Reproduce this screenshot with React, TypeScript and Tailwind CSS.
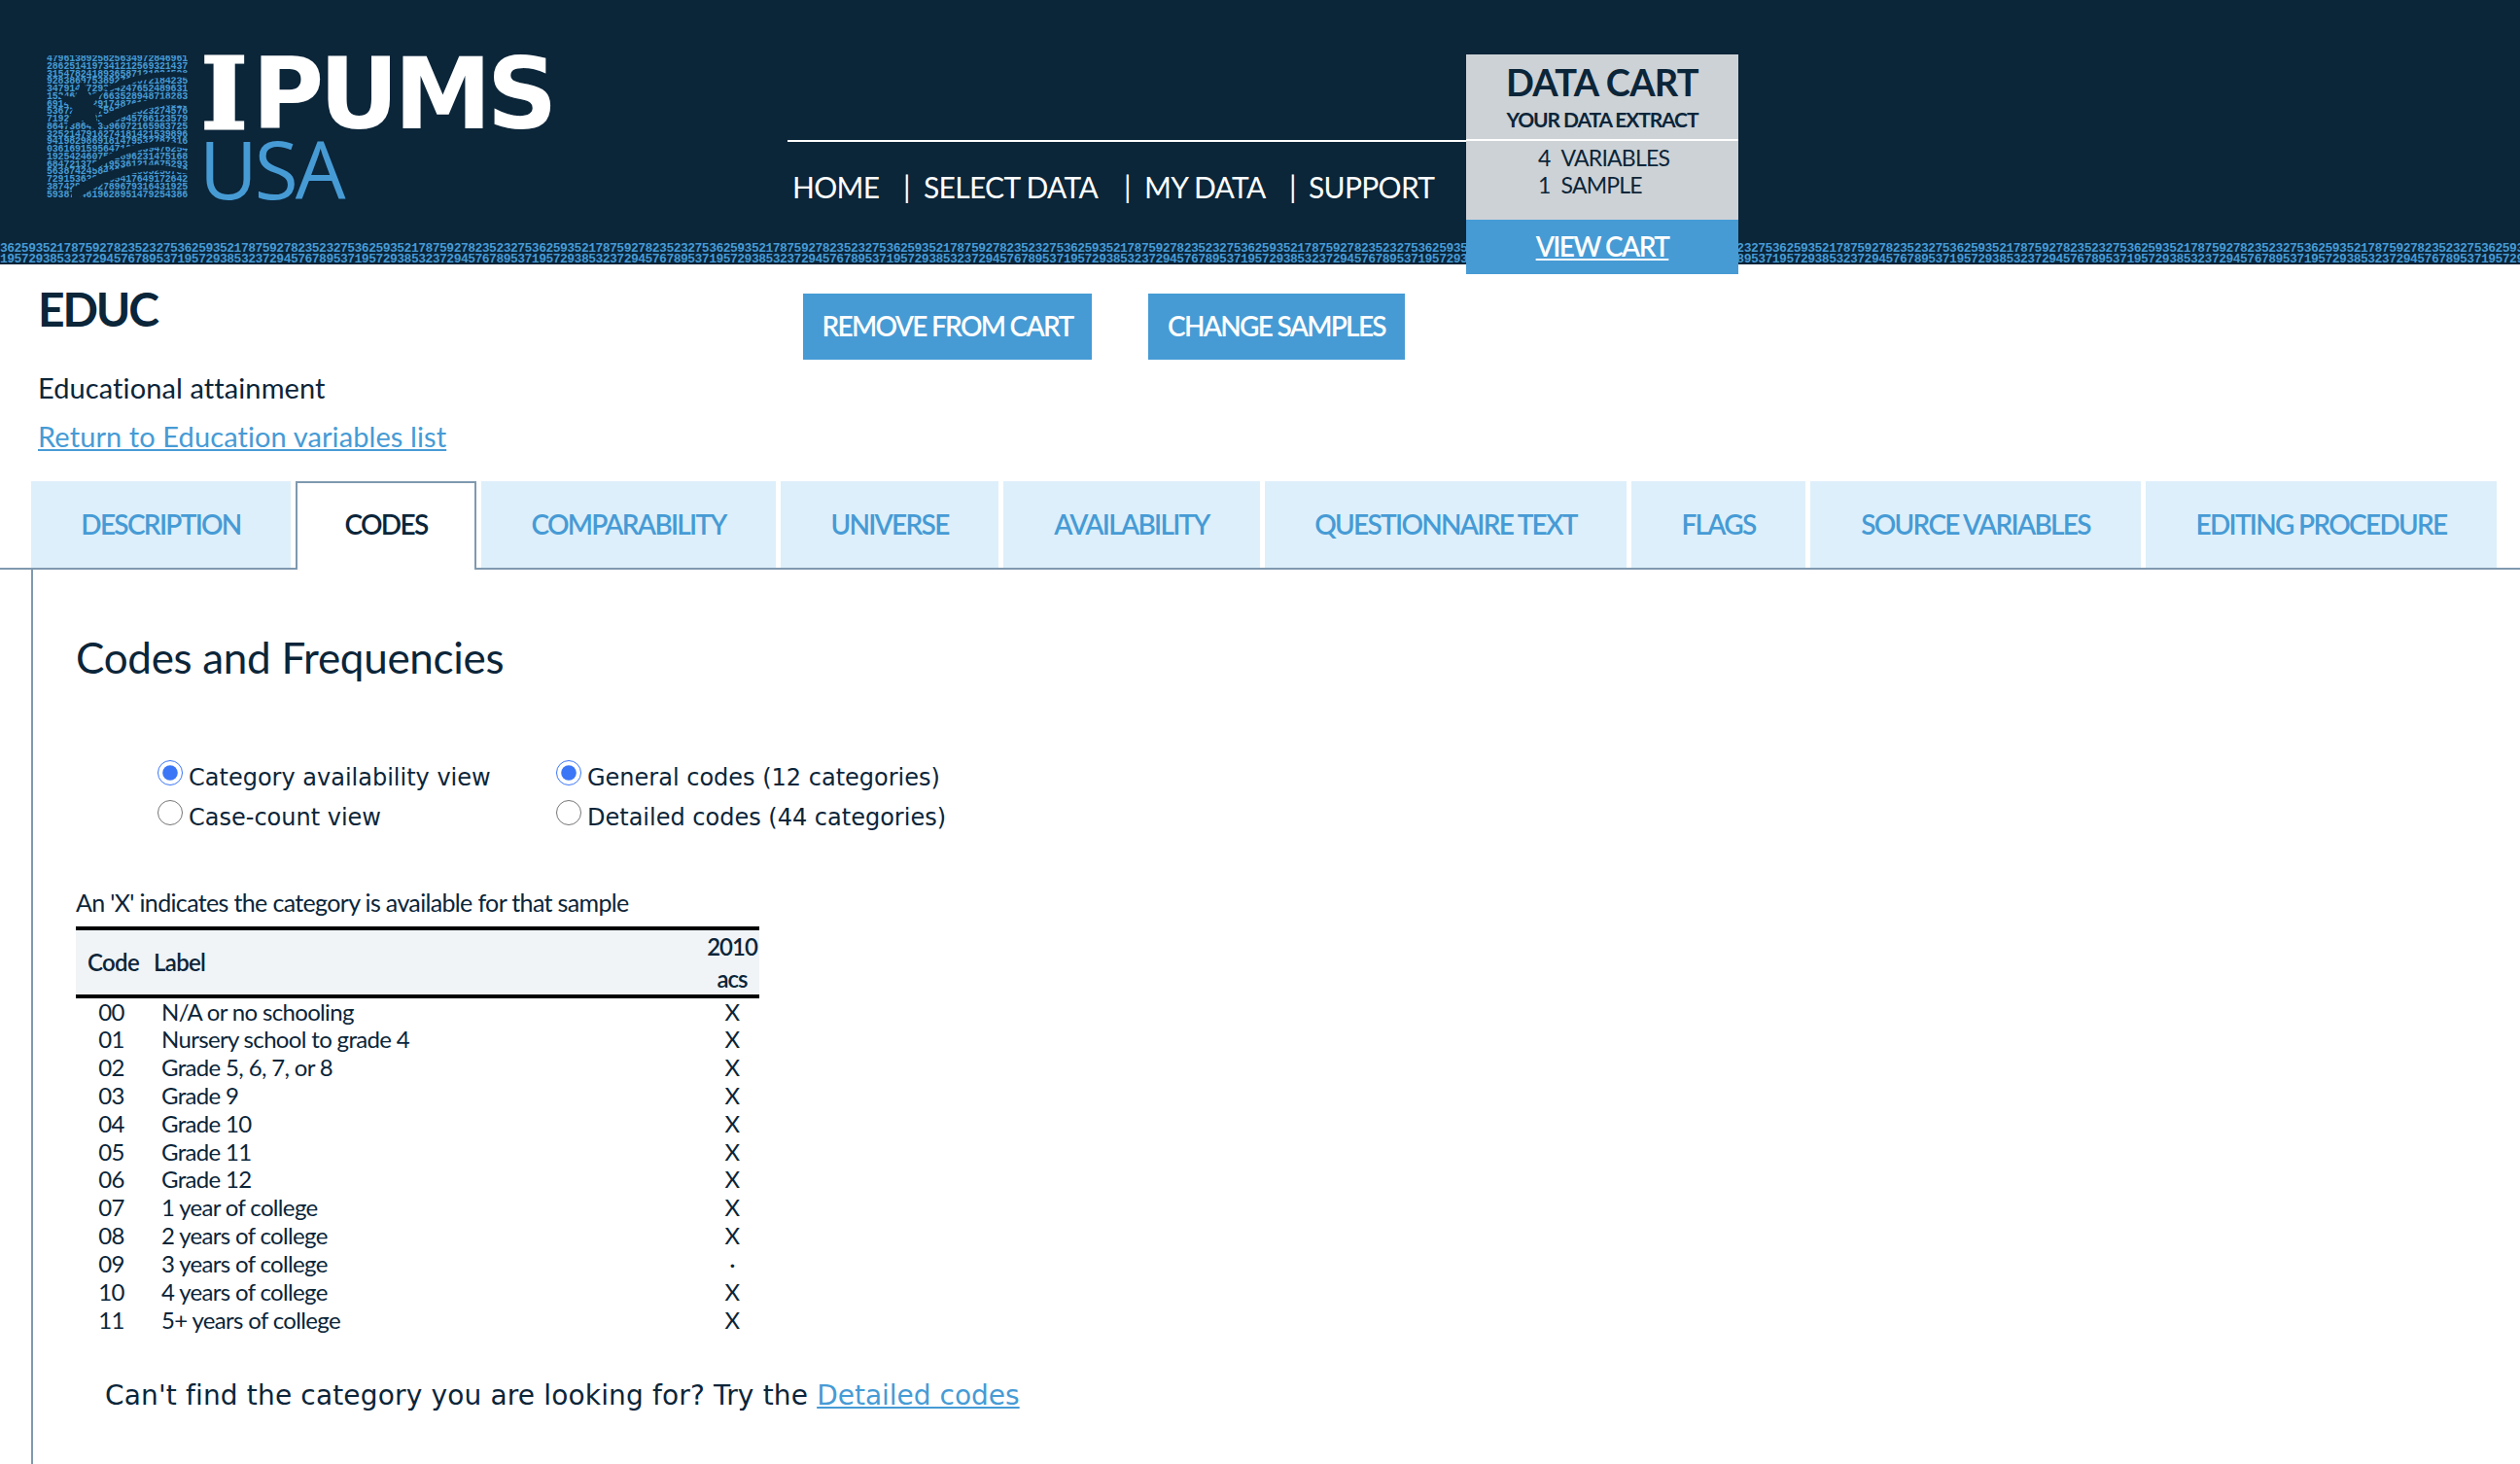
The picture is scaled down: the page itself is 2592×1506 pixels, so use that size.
import React from 'react';

const logoDigits = [
  '4796138925825634972846961',
  '2862514197341212569321437',
  '3154782418936587121934598',
  '9283869753892769672184235',
  '3479142729384247652489631',
  '1524687087663528948718283',
  '6914753629174876166446515',
  '5367241787592783523274576',
  '7192845532375945786123579',
  '8647386453596072165983725',
  '3252147916274181421539896',
  '9419829869181479532787316',
  '0361691595647128539476254',
  '1925424607532896231475168',
  '6847213759195361214675293',
  '5638742458423942865258732',
  '7291536394565417649172642',
  '3874291562789679316431925',
  '5938724619628951479254386',
];

const stripTop = '3625935217875927823523275'.repeat(15);
const stripBottom = '1957293853237294576789537'.repeat(15);

const tabs = [
  { label: 'DESCRIPTION', width: 'w-[267px]' },
  { label: 'CODES', width: 'w-[186px]', active: true },
  { label: 'COMPARABILITY', width: 'w-[303px]' },
  { label: 'UNIVERSE', width: 'w-[224px]' },
  { label: 'AVAILABILITY', width: 'w-[264px]' },
  { label: 'QUESTIONNAIRE TEXT', width: 'w-[372px]' },
  { label: 'FLAGS', width: 'w-[179px]' },
  { label: 'SOURCE VARIABLES', width: 'w-[340px]' },
  { label: 'EDITING PROCEDURE', width: 'w-[361px]' },
];

const rows = [
  ['00', 'N/A or no schooling', 'X'],
  ['01', 'Nursery school to grade 4', 'X'],
  ['02', 'Grade 5, 6, 7, or 8', 'X'],
  ['03', 'Grade 9', 'X'],
  ['04', 'Grade 10', 'X'],
  ['05', 'Grade 11', 'X'],
  ['06', 'Grade 12', 'X'],
  ['07', '1 year of college', 'X'],
  ['08', '2 years of college', 'X'],
  ['09', '3 years of college', '·'],
  ['10', '4 years of college', 'X'],
  ['11', '5+ years of college', 'X'],
];

const Logo = () => {
  return (
    <div className="flex items-start pl-[48px] pt-[57px]">
      <div className="relative h-[146px] w-[145px] overflow-hidden font-['Liberation_Mono',monospace] text-[10px] font-bold leading-[7.75px] tracking-[-0.2px] text-[#469bd5]">
        {logoDigits.map((row) => (
          <div key={row} className="whitespace-nowrap">
            {row}
          </div>
        ))}
        <svg className="absolute left-0 top-0" width="145" height="146" viewBox="0 0 145 146">
          <g fill="#0b2539">
            <path d="M37 25 L44 41 L61 35 L47 50 L59 56 L50 60 L54 80 L37 67 L20 73 L27 55 L10 40 L29 43 Z" />
            <path d="M60 33 Q100 13 145 18 L145 23 Q105 19 63 37 Z" />
            <path d="M52 65 Q98 39 145 46 L145 52 Q105 47 60 73 Z" />
            <path d="M44 113 Q96 79 145 92 L145 96 Q100 87 50 117 Z" />
            <path d="M26 137 Q84 101 145 118 L145 122 Q88 109 34 146 L26 146 Z" />
          </g>
        </svg>
      </div>
      <div className="ml-[14px] flex flex-col">
        <div className="flex h-[74px] items-center pt-[6px] font-bold leading-[74px] text-white">
          <span className="font-['DejaVu_Serif',serif] text-[101px] [-webkit-text-stroke:3px_white]">I</span>
          <span className="ml-[5px] font-['DejaVu_Sans',sans-serif] text-[101px] tracking-[-5px]">PUMS</span>
        </div>
        <div className="-ml-[2px] mt-[13px] h-[59px] font-['Open_Sans',sans-serif] text-[82px] leading-[59px] tracking-[-3px] text-[#469bd5]">
          USA
        </div>
      </div>
    </div>
  );
};

const Nav = () => {
  return (
    <div className="absolute left-[810px] top-[144px] w-[978px] border-t-2 border-white">
      <div className="flex h-[93px] items-center pl-[5px] text-[30px] tracking-[-0.7px] text-white">
        <span className="w-[114px]">HOME</span>
        <span className="w-[21px]">|</span>
        <span className="w-[206px]">SELECT DATA</span>
        <span className="w-[21px]">|</span>
        <span className="w-[149px]">MY DATA</span>
        <span className="w-[20px]">|</span>
        <span>SUPPORT</span>
      </div>
    </div>
  );
};

const DataCart = () => {
  return (
    <div className="absolute left-[1508px] top-[56px] flex h-[226px] w-[280px] flex-col bg-[#cdd2d6] text-center text-[#0b2539]">
      <div className="h-[89px] border-b-2 border-white">
        <div className="pt-[5px] text-[38px] font-bold leading-[46px] tracking-[-0.7px]">DATA CART</div>
        <div className="pt-[3px] text-[21px] font-bold leading-[26px] tracking-[-1.1px]">YOUR DATA EXTRACT</div>
      </div>
      <div className="flex-1 pl-[74px] pt-[3px] text-left text-[23px] leading-[28px] tracking-[-0.8px]">
        <div className="flex gap-[11px]">
          <span>4</span>
          <span>VARIABLES</span>
        </div>
        <div className="flex gap-[11px]">
          <span>1</span>
          <span>SAMPLE</span>
        </div>
      </div>
      <a className="flex h-[56px] items-center justify-center bg-[#469bd5] pb-[2px] text-[28px] font-semibold tracking-[-1.6px] text-white underline">
        VIEW CART
      </a>
    </div>
  );
};

const Radio = ({ label, checked }: { label: string; checked?: boolean }) => {
  return (
    <label className="flex h-[41px] items-start gap-[6px]">
      <input
        type="radio"
        readOnly
        checked={!!checked}
        className="m-0 h-[26px] w-[26px] shrink-0 accent-[#3b76f6]"
      />
      <span className="mt-[3px] whitespace-nowrap leading-[30px]">{label}</span>
    </label>
  );
};

const App = () => {
  return (
    <div className="min-h-[1506px] overflow-hidden bg-white font-['Lato',sans-serif] text-[#0b2539]">
      <header className="relative h-[272px] bg-[#0b2539]">
        <Logo />
        <div className="absolute bottom-0 left-0 w-full overflow-hidden whitespace-nowrap font-['Liberation_Mono',monospace] text-[13px] font-bold leading-[11px] tracking-[-0.51px] text-[#469bd5]">
          <div>{stripTop}</div>
          <div>{stripBottom}</div>
        </div>
        <Nav />
        <DataCart />
      </header>

      <section className="flex h-[223px]">
        <div className="w-[826px] pl-[39px] pt-[20px]">
          <h1 className="text-[48px] font-bold leading-[52px] tracking-[-2.2px]">EDUC</h1>
          <div className="mt-[30px] text-[29px] leading-[50px] tracking-[0.1px]">
            <p>Educational attainment</p>
            <a className="text-[#469bd5] underline">Return to Education variables list</a>
          </div>
        </div>
        <div className="flex items-start gap-[58px] pt-[30px]">
          <button className="h-[68px] w-[297px] whitespace-nowrap bg-[#469bd5] pb-[3px] text-[28px] font-semibold tracking-[-1.7px] text-white">
            REMOVE FROM CART
          </button>
          <button className="h-[68px] w-[264px] whitespace-nowrap bg-[#469bd5] pb-[3px] text-[28px] font-semibold tracking-[-1.7px] text-white">
            CHANGE SAMPLES
          </button>
        </div>
      </section>

      <nav className="flex h-[91px] gap-[5px] border-b-2 border-[#7f99af] pl-[32px]">
        {tabs.map((tab) =>
          tab.active ? (
            <div
              key={tab.label}
              className={`${tab.width} z-10 flex h-[91px] items-center justify-center border-x-2 border-t-2 border-[#7f99af] bg-white pb-[5px] text-[28px] font-semibold tracking-[-1.7px] text-[#0b2539]`}
            >
              {tab.label}
            </div>
          ) : (
            <div
              key={tab.label}
              className={`${tab.width} flex h-[89px] items-center justify-center bg-[#ddeffa] pb-[2px] text-[28px] font-semibold tracking-[-1.7px] text-[#469bd5]`}
            >
              {tab.label}
            </div>
          ),
        )}
      </nav>

      <main className="ml-[32px] min-h-[920px] border-l-[2px] border-[#7f99af] pl-[44px] pt-[60px]">
        <h2 className="text-[44px] leading-[60px] tracking-[-0.3px]">Codes and Frequencies</h2>

        <div className="ml-[84px] mt-[76px] flex gap-[71px] font-['DejaVu_Sans',sans-serif] text-[24px] text-[#0b2539]">
          <div className="w-[339px]">
            <Radio label="Category availability view" checked />
            <Radio label="Case-count view" />
          </div>
          <div>
            <Radio label="General codes (12 categories)" checked />
            <Radio label="Detailed codes (44 categories)" />
          </div>
        </div>

        <p className="mt-[46px] text-[25px] leading-[36px] tracking-[-0.65px]">
          An 'X' indicates the category is available for that sample
        </p>

        <table className="mt-[7px] w-[703px] table-fixed border-collapse text-[24px] tracking-[-0.66px]">
          <thead>
            <tr className="h-[69px] border-y-4 border-black bg-[#f0f4f7]">
              <th className="w-[76px] pl-[12px] text-left font-semibold">Code</th>
              <th className="pl-[4px] text-left font-semibold">Label</th>
              <th className="w-[56px] text-center font-semibold leading-[33px] tracking-[-1px]">
                2010
                <br />
                acs
              </th>
            </tr>
          </thead>
          <tbody>
            {rows.map(([code, label, mark]) => (
              <tr key={code} className="h-[28.9px] leading-[27px]">
                <td className="pr-[3px] text-center">{code}</td>
                <td className="pl-[12px]">{label}</td>
                <td className="text-center">{mark}</td>
              </tr>
            ))}
          </tbody>
        </table>

        <p className="ml-[30px] mt-[42px] font-['DejaVu_Sans',sans-serif] text-[28px] leading-[44px] tracking-[0.16px]">
          Can't find the category you are looking for? Try the{' '}
          <a className="tracking-[0px] text-[#469bd5] underline">Detailed codes</a>
        </p>
      </main>
    </div>
  );
};

export default App;
